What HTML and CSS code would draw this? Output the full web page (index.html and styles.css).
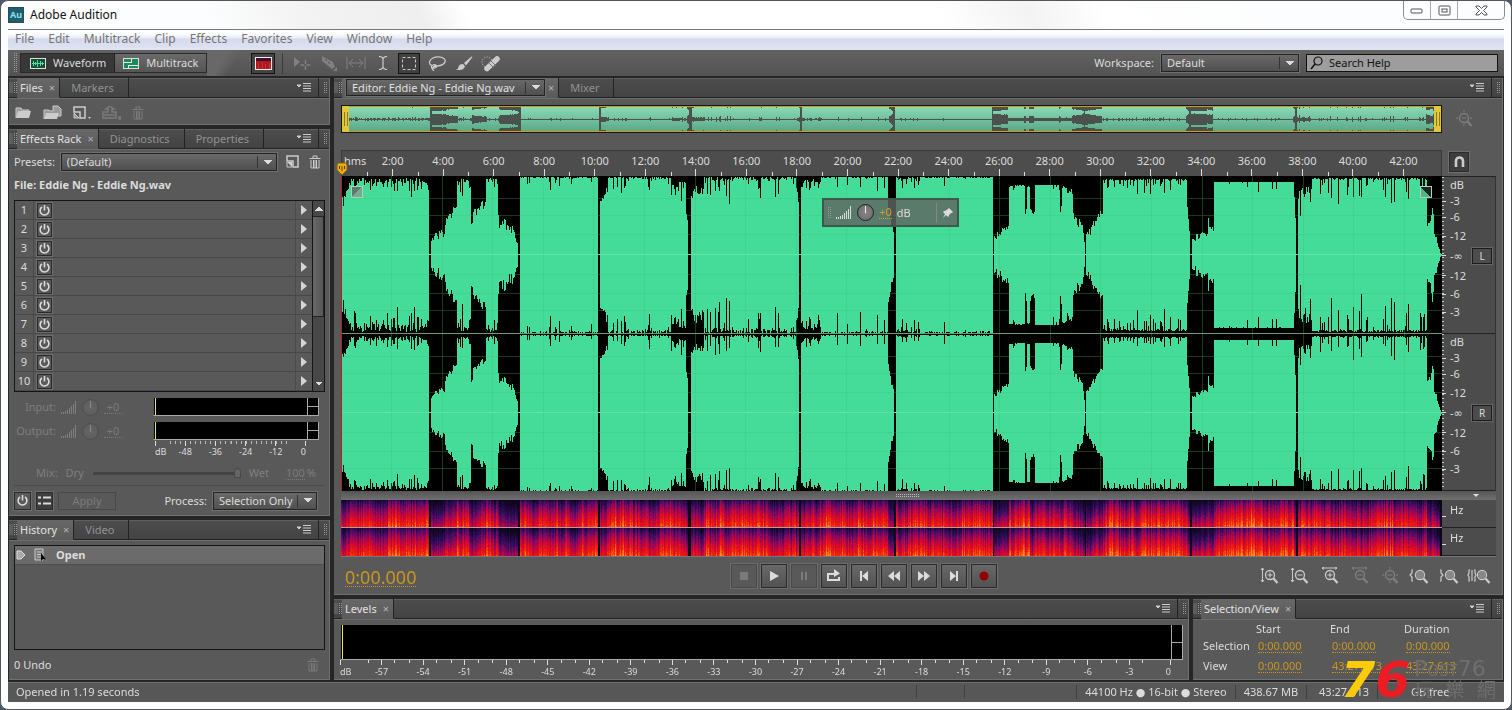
FILE: index.html
```html
<!DOCTYPE html>
<html lang="en">
  <head>
    <meta charset="UTF-8" />
    <meta name="viewport" content="width=device-width, initial-scale=1.0" />
    <title>Adobe Audition</title>
    <link rel="stylesheet" href="styles.css">
  </head>
  <body>
    <svg class="sprite" aria-hidden="true">
      <symbol id="power" viewBox="0 0 13 13"><path d="M4 3a4.4 4.4 0 1 0 5 0M6.500 1v5.500" fill="none" stroke="currentColor" stroke-width="1.600" /></symbol>
      <symbol id="menu" viewBox="0 0 14 9"><path d="M0 2h4L2 4zM6 .500h8M6 3h8M6 5.500h8M6 8h8" fill="currentColor" stroke="currentColor" stroke-width="1" /></symbol>
      <symbol id="trash" viewBox="0 0 12 14"><path d="M.500 3.500h11M4 3V1h4v2M2 5v8h8V5M4.500 5v8M7.500 5v8M6 5v8" fill="none" stroke="currentColor" /></symbol>
      <symbol id="new" viewBox="0 0 14 14"><path d="M1 1h11v11H7V6H1z" fill="none" stroke="currentColor" stroke-width="1.500" /><path d="M1 7h5v5z" fill="currentColor" /><path d="M1 7v5h5" fill="none" stroke="currentColor" /></symbol>
      <symbol id="bars" viewBox="0 0 16 13"><path d="M.500 11v2M2.500 11v2M4.500 10v3M6.500 9v4M8.500 7v6M10.500 5v8M12.500 3v10M14.500 0v13" stroke="currentColor" /></symbol>
      <symbol id="lens" viewBox="0 0 20 18"><circle cx="11" cy="8" r="4.500" fill="none" stroke="currentColor" stroke-width="1.300" /><path d="M14.500 11.500l4 4.500" stroke="currentColor" stroke-width="2.200" /></symbol>
    </svg>

    <div class="window">
      <header class="title-bar">
        <span class="app-icon">Au</span>
        <h1>Adobe Audition</h1>
        <div class="window-buttons">
          <button aria-label="Minimize"><svg width="14" height="7" viewBox="0 0 14 7"><rect x="1" y="2" width="11" height="4" rx="1" fill="#fff" stroke="#555" /></svg></button>
          <button aria-label="Maximize"><svg width="13" height="11" viewBox="0 0 13 11"><rect x="1" y="1" width="11" height="9" rx="1" fill="#fff" stroke="#555" /><rect x="4" y="4" width="5" height="3" fill="#fff" stroke="#555" /></svg></button>
          <button aria-label="Close" class="close"><svg width="13" height="11" viewBox="0 0 13 11"><path d="M1 1h3l2.500 2.500L9 1h3v1L8.500 5.500 12 9v1H9L6.500 7.500 4 10H1V9l3.500-3.500L1 2z" fill="#fff" stroke="#555" /></svg></button>
        </div>
      </header>

      <nav class="menu-bar">
        <a href="#">File</a><a href="#">Edit</a><a href="#">Multitrack</a><a href="#">Clip</a><a href="#">Effects</a><a href="#">Favorites</a><a href="#">View</a><a href="#">Window</a><a href="#">Help</a>
      </nav>

      <div class="toolbar">
        <span class="grip"></span>
        <div class="modes">
          <button class="mode on"><svg width="17" height="13" viewBox="0 0 17 13"><rect x=".500" y="1.500" width="15" height="10" fill="#174e37" stroke="#ddd" /><path d="M2 6.500h12M3.500 4v5M5.500 5v3M7.500 3v7M10.500 4v5M12.500 5v3" stroke="#4fe0a0" /></svg>Waveform</button>
          <button class="mode"><svg width="17" height="13" viewBox="0 0 17 13"><rect x=".500" y="1.500" width="15" height="10" fill="#1d8a5c" stroke="#ddd" /><path d="M1 5.500h8M5 8.500h10M8.500 2v4M5.500 8v3" stroke="#e0f0e8" /></svg>Multitrack</button>
        </div>
        <span class="swoosh"></span>
        <button class="spectral-button" aria-label="Show spectral display"><svg width="17" height="13" viewBox="0 0 17 13"><rect x=".500" y=".500" width="16" height="12" fill="#b01820" stroke="#eee" /><path d="M1 1h15v3H1z" fill="#401030" /><path d="M3.500 6v6M7.500 5v7M10.500 7v5M14.500 6v6" stroke="#cc302c" /></svg></button>
        <div class="tools">
          <button disabled aria-label="Move"><svg width="18" height="16" viewBox="0 0 18 16"><path d="M1 2v10l6-5z" fill="currentColor" /><path d="M12.500 5v10M7.500 10h10" stroke="currentColor" stroke-width="1.500" stroke-dasharray="4 2" /></svg></button>
          <button disabled aria-label="Razor"><svg width="18" height="16" viewBox="0 0 18 16"><path d="M2 1l11 6 2 5-3 2L2 6z" fill="currentColor" /><path d="M5 4l2 2M8 7l2 2" stroke="#555" /><path d="M17 12v4h-4z" fill="currentColor" /></svg></button>
          <button disabled aria-label="Slip"><svg width="20" height="14" viewBox="0 0 20 14"><path d="M1 1v12M19 1v12M3 7h14M7 3L3 7l4 4M13 3l4 4-4 4" fill="none" stroke="currentColor" /></svg></button>
          <button aria-label="Time selection"><svg width="10" height="14" viewBox="0 0 10 14"><path d="M1 .500q3 0 4 2 1-2 4-2M5 2v10M1 13.500q3 0 4-2 1 2 4 2" fill="none" stroke="currentColor" stroke-width="1.200" /></svg></button>
          <button class="on" aria-label="Marquee selection"><svg width="16" height="15" viewBox="0 0 16 15"><rect x="1.500" y="1.500" width="13" height="12" fill="none" stroke="currentColor" stroke-dasharray="3 2" /></svg></button>
          <button aria-label="Lasso selection"><svg width="18" height="15" viewBox="0 0 18 15"><path d="M4 9.500C0 8 1 4 5 2s11-1 12 2-3 6-8 6-5 3-2 2 1-4-2-3-1 4 1 6" fill="none" stroke="currentColor" stroke-width="1.300" /></svg></button>
          <button aria-label="Paintbrush"><svg width="18" height="15" viewBox="0 0 18 15"><path d="M16.500.500L9 7l2 2.500L17.500 1zM8 8q-4 0-4.500 3T.500 13.500Q8 15.500 10 10.500z" fill="currentColor" /></svg></button>
          <button aria-label="Spot healing"><svg width="20" height="17" viewBox="0 0 20 17"><circle cx="6" cy="7" r="5" fill="none" stroke="currentColor" stroke-dasharray="1 1.500" /><path d="M6 13.500L16 4" stroke="currentColor" stroke-width="5.500" stroke-linecap="round" /><path d="M8 8l5 5M10 6l5 5" stroke="#777" /></svg></button>
        </div>
        <label class="workspace-label" for="workspace">Workspace:</label>
        <select id="workspace" class="workspace-select"><option>Default</option></select>
        <label class="search"><svg width="14" height="14" viewBox="0 0 14 14"><circle cx="8" cy="5" r="4" fill="none" stroke="#111" stroke-width="1.200" /><path d="M5 8l-4 5" stroke="#111" stroke-width="1.500" /></svg><input type="text" value="Search Help" aria-label="Search help" /></label>
      </div>

      <main class="workspace">
        <div class="side">
          <section class="panel">
            <div class="tabs">
              <span class="grip small"></span>
              <button class="tab active">Files <i>×</i></button>
              <button class="tab">Markers</button>
              <button class="panel-menu" aria-label="Panel menu"><svg width="14" height="9"><use href="#menu" /></svg></button>
              <span class="panel-end"><span class="grip small"></span></span>
            </div>
            <div class="file-tools">
              <button aria-label="Open file"><svg width="17" height="13" viewBox="0 0 17 13"><path d="M1 12V2h5l1 2h7v1" fill="#999" stroke="currentColor" /><path d="M1 12l2-7h13l-2 7z" fill="currentColor" /></svg></button>
              <button aria-label="Import file"><svg width="19" height="15" viewBox="0 0 19 15"><path d="M1 14V5h5l1 1h3V1h5l3 3v7h-3" fill="#999" stroke="currentColor" /><path d="M1 14l2-6h13l-2 6z" fill="currentColor" /></svg></button>
              <button aria-label="New file"><svg width="18" height="14" viewBox="0 0 18 14"><path d="M1 1h11v11H7V6H1z" fill="none" stroke="currentColor" stroke-width="1.500" /><path d="M1 7v5h5z" fill="#999" stroke="currentColor" /><path d="M15 11h3l-1.500 2z" fill="currentColor" /></svg></button>
              <button disabled aria-label="Insert into multitrack"><svg width="19" height="14" viewBox="0 0 19 14"><path d="M1 6h5V3H4l4-3 4 3h-2v3h4v6H1zM2 9h11M17 11h2v2h-2z" fill="none" stroke="currentColor" stroke-width="1.500" /></svg></button>
              <button disabled aria-label="Close file"><svg width="12" height="14"><use href="#trash" /></svg></button>
            </div>
          </section>

          <section class="panel">
            <div class="tabs">
              <span class="grip small"></span>
              <button class="tab active">Effects Rack <i>×</i></button>
              <button class="tab">Diagnostics</button>
              <button class="tab">Properties</button>
              <button class="panel-menu" aria-label="Panel menu"><svg width="14" height="9"><use href="#menu" /></svg></button>
              <span class="panel-end"><span class="grip small"></span></span>
            </div>
            <div class="rack">
              <div class="presets">
                <label for="presets">Presets:</label>
                <select id="presets"><option>(Default)</option></select>
                <button aria-label="Save preset"><svg width="14" height="14"><use href="#new" /></svg></button>
                <button aria-label="Delete preset"><svg width="12" height="14"><use href="#trash" /></svg></button>
              </div>
              <h2>File: Eddie Ng - Eddie Ng.wav</h2>
              <div class="slots">
                <ol id="slots"></ol>
                <div class="scrollbar"><b></b><span></span><b class="down"></b></div>
              </div>
              <div class="gains">
                <div class="gain">
                  <span>Input:</span><svg width="16" height="13"><use href="#bars" /></svg><span class="knob"></span><button disabled class="hot">+0</button>
                  <div class="meter"><span></span></div>
                </div>
                <div class="gain">
                  <span>Output:</span><svg width="16" height="13"><use href="#bars" /></svg><span class="knob"></span><button disabled class="hot">+0</button>
                  <div class="meter"><span></span></div>
                </div>
                <div class="scale rack-scale"><span>dB</span><span>-48</span><span>-36</span><span>-24</span><span>-12</span><span>0</span></div>
              </div>
              <div class="mix">
                <label for="mix">Mix:</label><span>Dry</span>
                <input id="mix" type="range" value="100" disabled />
                <span>Wet</span><button disabled class="hot">100</button><span>%</span>
              </div>
              <div class="process">
                <button class="icon-button" aria-label="Toggle rack power"><svg width="13" height="13"><use href="#power" /></svg></button>
                <button class="icon-button pressed" aria-label="Show list"><svg width="13" height="9" viewBox="0 0 13 9"><path d="M0 1.500h3M0 7.500h3M5 1.500h8M5 7.500h8" stroke="currentColor" stroke-width="2" /></svg></button>
                <button class="apply" disabled>Apply</button>
                <label for="process">Process:</label>
                <select id="process"><option>Selection Only</option></select>
              </div>
            </div>
          </section>

          <section class="panel history">
            <div class="tabs">
              <span class="grip small"></span>
              <button class="tab active">History <i>×</i></button>
              <button class="tab">Video</button>
              <button class="panel-menu" aria-label="Panel menu"><svg width="14" height="9"><use href="#menu" /></svg></button>
              <span class="panel-end"><span class="grip small"></span></span>
            </div>
            <div class="history-list">
              <div class="history-item">
                <svg width="10" height="10" viewBox="0 0 10 10"><path d="M1 1h4l4 4-4 4H1z" fill="#aaa" stroke="#ddd" /></svg>
                <svg width="14" height="14" viewBox="0 0 14 14"><path d="M1 1h8v11H1zM3 4h5M3 6.500h5M3 9h4" fill="#777" stroke="#ccc" /><path d="M7 5v8l2-2 3 .500z" fill="#000" /></svg>
                <strong>Open</strong>
              </div>
            </div>
            <div class="history-foot"><span>0 Undo</span><button disabled aria-label="Delete history"><svg width="12" height="14"><use href="#trash" /></svg></button></div>
          </section>
        </div>

        <div class="stage">
          <section class="panel editor">
            <div class="tabs">
              <span class="grip small"></span>
              <div class="tab active file-tab"><select aria-label="Editor file"><option>Editor: Eddie Ng - Eddie Ng.wav</option></select> <i>×</i></div>
              <button class="tab">Mixer</button>
              <button class="panel-menu" aria-label="Panel menu"><svg width="14" height="9"><use href="#menu" /></svg></button>
              <span class="panel-end"><span class="grip small"></span></span>
            </div>

            <div class="overview-row">
              <div class="overview"><canvas id="overview" width="1100" height="26"></canvas></div>
              <button disabled aria-label="Zoom out full"><svg width="20" height="18" viewBox="0 0 20 18"><use href="#lens" width="20" height="18" /><path d="M9 8h4M11 0v2M11 14v2M3 8h2M17 8h2" stroke="currentColor" /></svg></button>
            </div>

            <div class="ruler-row">
              <div class="ruler">
                <span class="unit">hms</span>
                <span>2:00</span><span>4:00</span><span>6:00</span><span>8:00</span><span>10:00</span><span>12:00</span><span>14:00</span><span>16:00</span><span>18:00</span><span>20:00</span><span>22:00</span><span>24:00</span><span>26:00</span><span>28:00</span><span>30:00</span><span>32:00</span><span>34:00</span><span>36:00</span><span>38:00</span><span>40:00</span><span>42:00</span>
                <svg class="playhead" width="12" height="14" viewBox="0 0 12 14"><path d="M2 1h8l1 2v5l-5 5-5-5V3z" fill="#e8ae17" stroke="#8a6100" /><path d="M3.500 4v3M6 4v5M8.500 4v3" stroke="#5c4000" /></svg>
              </div>
              <button class="icon-button pressed snap" aria-label="Snap"><svg width="11" height="12" viewBox="0 0 11 12"><path d="M2 11V5a3.500 3.500 0 0 1 7 0v6" fill="none" stroke="#ccc" stroke-width="2.600" /></svg></button>
            </div>

            <div class="display">
              <div class="waves">
                <canvas id="waves" width="1100" height="315"></canvas>
                <span class="fade in"></span>
                <span class="fade out"></span>
                <div class="hud">
                  <span class="grip"></span>
                  <svg width="16" height="13"><use href="#bars" /></svg>
                  <span class="knob"></span>
                  <button class="hot">+0</button><span>dB</span>
                  <button class="pin" aria-label="Pin"><svg width="10" height="10" viewBox="0 0 10 10"><path d="M6 0l4 4-1 1-1 0-2 2 0 1-1 1-2-2-3 3 2-4-2-2 1-1 1 0 3-2z" fill="currentColor" /></svg></button>
                </div>
              </div>
              <div class="channels">
                <div class="channel"><span>dB</span><span>-3</span><span>-6</span><span>-12</span><span>-∞</span><span>-12</span><span>-6</span><span>-3</span><button>L</button></div>
                <div class="channel"><span>dB</span><span>-3</span><span>-6</span><span>-12</span><span>-∞</span><span>-12</span><span>-6</span><span>-3</span><button>R</button></div>
              </div>
              <div class="splitter"><span class="splitter-grip"></span><i></i></div>
              <canvas id="spectral" width="1100" height="56"></canvas>
              <div class="hertz"><span>Hz</span><span>Hz</span></div>
            </div>

            <div class="transport-row">
              <button class="hot time">0:00.000</button>
              <div class="transport">
                <button disabled aria-label="Stop"><svg width="16" height="14" viewBox="0 0 16 14"><path d="M4 3h8v8H4z" fill="currentColor" /></svg></button>
                <button aria-label="Play"><svg width="16" height="14" viewBox="0 0 16 14"><path d="M4 2l9 5-9 5z" fill="currentColor" /></svg></button>
                <button disabled aria-label="Pause"><svg width="16" height="14" viewBox="0 0 16 14"><path d="M5 3h2v8H5zM9 3h2v8H9z" fill="currentColor" /></svg></button>
                <button aria-label="Loop"><svg width="16" height="14" viewBox="0 0 16 14"><path d="M5 5H2v6h11V8M3 5h6" fill="none" stroke="currentColor" stroke-width="2" /><path d="M8 0l6 4.500L8 8z" fill="currentColor" /></svg></button>
                <button aria-label="Go to start"><svg width="16" height="14" viewBox="0 0 16 14"><path d="M4 2h2v10H4zM12 2v10L6 7z" fill="currentColor" /></svg></button>
                <button aria-label="Rewind"><svg width="16" height="14" viewBox="0 0 16 14"><path d="M8 2v10L2 7zM14 2v10L8 7z" fill="currentColor" /></svg></button>
                <button aria-label="Fast forward"><svg width="16" height="14" viewBox="0 0 16 14"><path d="M2 2v10l6-5zM8 2v10l6-5z" fill="currentColor" /></svg></button>
                <button aria-label="Go to end"><svg width="16" height="14" viewBox="0 0 16 14"><path d="M4 2v10l6-5zM10 2h2v10h-2z" fill="currentColor" /></svg></button>
                <button aria-label="Record"><svg width="16" height="14" viewBox="0 0 16 14"><circle cx="8" cy="7" r="4.500" fill="#900000" /></svg></button>
              </div>
              <div class="zooms">
                <button aria-label="Zoom in amplitude"><svg width="20" height="18" viewBox="0 0 20 18"><use href="#lens" width="20" height="18" /><path d="M8.500 8h5M11 5.500v5M3.500 1v14M2 3l1.500-2L5 3M2 13l1.500 2L5 13" fill="none" stroke="currentColor" /></svg></button>
                <button aria-label="Zoom out amplitude"><svg width="20" height="18" viewBox="0 0 20 18"><use href="#lens" width="20" height="18" /><path d="M8.500 8h5M3.500 1v14M2 3l1.500-2L5 3M2 13l1.500 2L5 13" fill="none" stroke="currentColor" /></svg></button>
                <button aria-label="Zoom in time"><svg width="20" height="18" viewBox="0 0 20 18"><use href="#lens" width="20" height="18" /><path d="M8.500 8h5M11 5.500v5M3 1h15M5 0L3 1l2 1.500M16 0l2 1-2 1.500" fill="none" stroke="currentColor" /></svg></button>
                <button disabled aria-label="Zoom out time"><svg width="20" height="18" viewBox="0 0 20 18"><use href="#lens" width="20" height="18" /><path d="M8.500 8h5M3 1h15M5 0L3 1l2 1.500M16 0l2 1-2 1.500" fill="none" stroke="currentColor" /></svg></button>
                <button disabled aria-label="Zoom out full"><svg width="20" height="18" viewBox="0 0 20 18"><use href="#lens" width="20" height="18" /><path d="M8.500 8h5M11 0v2M11 14v2M3 8h2M17 8h2" stroke="currentColor" /></svg></button>
                <button aria-label="Zoom to in point"><svg width="20" height="18" viewBox="0 0 20 18"><use href="#lens" width="20" height="18" /><circle cx="11" cy="8" r="4" fill="#888" /><path d="M4 3H3v3L1 8l2 2v4h1" fill="none" stroke="currentColor" stroke-width="1.200" /></svg></button>
                <button aria-label="Zoom to out point"><svg width="20" height="18" viewBox="0 0 20 18"><use href="#lens" width="20" height="18" /><circle cx="11" cy="8" r="4" fill="#888" /><path d="M1 3h1v3l2 2-2 2v4H1" fill="none" stroke="currentColor" stroke-width="1.200" /></svg></button>
                <button aria-label="Zoom to selection"><svg width="24" height="18" viewBox="0 0 24 18"><use href="#lens" x="4" width="20" height="18" /><circle cx="15" cy="8" r="4" fill="#888" /><path d="M3 3H2v3L1 8l1 2v4h1M5 3v11M7 3h1v3l1 2-1 2v4H7" fill="none" stroke="currentColor" stroke-width="1.200" /></svg></button>
              </div>
            </div>
          </section>

          <div class="bottom">
            <section class="panel levels">
              <div class="tabs">
                <span class="grip small"></span>
                <button class="tab active">Levels <i>×</i></button>
                <button class="panel-menu" aria-label="Panel menu"><svg width="14" height="9"><use href="#menu" /></svg></button>
                <span class="panel-end"><span class="grip small"></span></span>
              </div>
              <div class="levels-body">
                <div class="meter"><span></span></div>
                <div class="scale"><span>dB</span><span>-57</span><span>-54</span><span>-51</span><span>-48</span><span>-45</span><span>-42</span><span>-39</span><span>-36</span><span>-33</span><span>-30</span><span>-27</span><span>-24</span><span>-21</span><span>-18</span><span>-15</span><span>-12</span><span>-9</span><span>-6</span><span>-3</span><span>0</span></div>
              </div>
            </section>
            <section class="panel selection">
              <div class="tabs">
                <span class="grip small"></span>
                <button class="tab active">Selection/View <i>×</i></button>
                <button class="panel-menu" aria-label="Panel menu"><svg width="14" height="9"><use href="#menu" /></svg></button>
                <span class="panel-end"><span class="grip small"></span></span>
              </div>
              <table>
                <tr><td></td><th scope="col">Start</th><th scope="col">End</th><th scope="col">Duration</th></tr>
                <tr><th scope="row">Selection</th><td><button class="hot">0:00.000</button></td><td><button class="hot">0:00.000</button></td><td><button class="hot">0:00.000</button></td></tr>
                <tr><th scope="row">View</th><td><button class="hot">0:00.000</button></td><td><button class="hot">43:27.613</button></td><td><button class="hot">43:27.613</button></td></tr>
              </table>
            </section>
          </div>
        </div>
      </main>

      <footer class="status">
        <span class="message">Opened in 1.19 seconds</span>
        <span class="blank"></span>
        <span class="blank long"></span>
        <span>44100 Hz ● 16-bit ● Stereo</span>
        <span>438.67 MB</span>
        <span class="duration">43:27.613</span>
        <span class="free">GB free</span>
      </footer>
    </div>

    <div class="watermark">
      <b class="seven">7</b><b class="six">6</b>
      <div class="site"><em>Post76</em><div class="site-name"><span>玩</span><span>樂</span><span>網</span></div></div>
    </div>

    <script src="script.js"></script>
  </body>
</html>
```

FILE: styles.css
```css
* {
  box-sizing: border-box;
}
body {
  margin: 0;
  background: #4b5a66;
  color: #dcdcdc;
  font: 11px/14px "Noto Sans", "DejaVu Sans", "Noto Sans CJK TC", sans-serif;
}
button,
select,
input {
  font: inherit;
  color: inherit;
}
button {
  display: flex;
  align-items: center;
  justify-content: center;
  padding: 0;
  border: 0;
  background: none;
}
button:disabled {
  color: #7b7b7b;
}
svg,
canvas {
  display: block;
  flex: none;
}
i {
  font-style: normal;
}
.sprite {
  position: absolute;
  width: 0;
  height: 0;
}
select {
  appearance: none;
  height: 18px;
  padding: 0 22px 0 5px;
  border: 1px solid #232323;
  border-radius: 0;
  outline: 1px solid #707070;
  background:
    linear-gradient(#333, #333) right 18px center / 1px 12px no-repeat,
    linear-gradient(to bottom right, #ddd 50%, transparent 0) right 4px center / 4px 5px no-repeat,
    linear-gradient(to bottom left, #ddd 50%, transparent 0) right 8px center / 4px 5px no-repeat,
    linear-gradient(#696969, #505050);
}
.grip {
  width: 4px;
  height: 20px;
  background: conic-gradient(#999 25%, transparent 0) 0 0 / 2px 2px;
}
.grip.small {
  height: 11px;
  flex: none;
}
.hot {
  display: inline-block;
  color: #c8961e;
  border-bottom: 1px dotted currentColor;
  line-height: 12px;
}

/* window frame */
.window {
  display: flex;
  flex-direction: column;
  height: 100vh;
  padding: 0 7px 7px;
  border: 1px solid #555;
  border-radius: 8px;
  background: #fcfdfe;
}
.title-bar {
  display: flex;
  align-items: center;
  height: 28px;
  flex: none;
  margin: 0 -7px;
  padding-left: 7px;
  border-radius: 8px 8px 0 0;
  background: linear-gradient(65deg, transparent 14%, #f3f3f3 20%, #efefef 28%, #fff 31%, #fff 62%, #f3f3f3 68%, #fff 73%, transparent 85%);
}
.title-bar h1 {
  flex: 1;
  margin: 0 0 0 6px;
  color: #111;
  font-size: 12px;
  font-weight: 400;
}
.app-icon {
  width: 16px;
  height: 16px;
  border: 1px solid #2d4c55;
  background: #1d5f6e;
  color: #8adfe9;
  font-size: 9px;
  font-weight: 700;
  line-height: 14px;
  text-align: center;
}
.window-buttons {
  display: flex;
  align-self: flex-start;
  height: 19px;
  margin-right: 6px;
  border: 1px solid #8d8d8d;
  border-top: 0;
  border-radius: 0 0 5px 5px;
}
.window-buttons button {
  width: 27px;
  border-right: 1px solid #aaa;
}
.window-buttons .close {
  width: 46px;
  border: 0;
}
.menu-bar {
  display: flex;
  gap: 14px;
  height: 21px;
  flex: none;
  padding: 0 7px;
  border-top: 1px solid #777;
  background: linear-gradient(#fff 15%, #e8ebf6 40%, #d5daec 45%, #dfe4f3);
}
.menu-bar a {
  color: #767676;
  font-size: 12px;
  line-height: 18px;
  text-decoration: none;
}

/* toolbar */
.toolbar {
  display: flex;
  align-items: center;
  height: 26px;
  flex: none;
  padding: 0 6px 0 5px;
  background: linear-gradient(#626262, #535353);
}
.modes {
  display: flex;
  margin-left: 3px;
  border: 1px solid #2a2a2a;
}
.mode {
  gap: 6px;
  height: 18px;
  padding: 0 8px;
  background: linear-gradient(#6a6a6a, #555);
}
.mode.on {
  padding-left: 9px;
  border-right: 1px solid #222;
  background: #383838;
}
.swoosh {
  width: 44px;
  height: 26px;
  background: linear-gradient(120deg, #686868 35%, transparent 60%);
}
.spectral-button {
  width: 24px;
  height: 21px;
  border: 1px solid #141414;
  background: #444;
}
.tools {
  display: flex;
  margin-left: 7px;
  padding-left: 5px;
  border-left: 1px solid #3b3b3b;
}
.tools button {
  width: 27px;
  height: 21px;
  color: #ccc;
}
.tools button:disabled {
  color: #808080;
}
.tools .on {
  width: 22px;
  margin: 0 3px 0 2px;
  border: 1px solid #141414;
  background: #404040;
}
.workspace-label {
  margin-left: auto;
}
.workspace-select {
  width: 138px;
  margin: 0 7px;
}
.search {
  display: flex;
  align-items: center;
  gap: 5px;
  width: 192px;
  height: 18px;
  padding-left: 3px;
  border: 1px solid #111;
  background: #9d9d9d;
}
.search input {
  min-width: 0;
  flex: 1;
  padding: 0;
  border: 0;
  background: none;
  color: #111;
}

/* panels */
.workspace {
  display: grid;
  grid-template-columns: 321px minmax(0, 1fr);
  gap: 4px;
  flex: 1;
  min-height: 0;
  padding: 2px 1px;
  background: #262626;
}
.side,
.stage {
  display: flex;
  flex-direction: column;
  gap: 4px;
  min-width: 0;
  min-height: 0;
}
.panel {
  display: flex;
  flex-direction: column;
  min-width: 0;
  border: solid #707070;
  border-width: 0 1px 1px 0;
  background: #595959;
}
.tabs {
  display: flex;
  align-items: center;
  height: 20px;
  flex: none;
  padding-left: 4px;
  border-bottom: 1px solid #222;
  background: linear-gradient(#4d4d4d, #434343);
  box-shadow: inset 0 1px #606060, 0 1px #6d6d6d;
}
.tabs > .grip:first-child {
  box-shadow: -4px 0 #5e5e5e;
}
.tab {
  height: 21px;
  padding: 0 14px 0 11px;
  border-right: 1px solid #222;
  color: #929292;
}
.tab.active {
  position: relative;
  height: 20px;
  gap: 6px;
  margin-bottom: -1px;
  padding: 0 4px 0 3px;
  border-bottom: 1px solid #5b5b5b;
  background: linear-gradient(#686868, #5b5b5b);
  color: #e2e2e2;
}
.tab i {
  color: #b5b5b5;
}
.panel-menu {
  margin: 0 7px 0 auto;
  color: #ccc;
}
.panel-end {
  display: flex;
  align-items: center;
  align-self: stretch;
  width: 11px;
  padding-left: 4px;
  border-left: 1px solid #222;
}
.file-tools {
  display: flex;
  align-items: center;
  gap: 11px;
  height: 26px;
  padding: 3px 6px 0;
  color: #ccc;
}
.rack {
  padding: 4px 4px 0 5px;
}
.presets {
  display: flex;
  align-items: center;
  height: 18px;
}
.presets select {
  width: 216px;
  margin-left: 6px;
}
.presets button {
  margin-left: 9px;
  color: #ccc;
}
.rack h2 {
  margin: 0 0 1px;
  font-size: 11px;
  line-height: 28px;
}
.slots {
  display: flex;
  border: 1px solid #151515;
}
.slots ol {
  flex: 1;
  margin: 0;
  padding: 0;
  list-style: none;
}
.slots li {
  display: flex;
  align-items: center;
  height: 19px;
  border-bottom: 1px solid #484848;
}
.slot-number {
  width: 19px;
  border-right: 1px solid #4b4b4b;
  text-align: center;
  line-height: 18px;
}
.slot-power {
  width: 15px;
  height: 15px;
  margin-left: 3px;
  border: 1px solid #2a2a2a;
  outline: 1px solid #6e6e6e;
}
.slot-menu {
  width: 17px;
  height: 18px;
  margin-left: auto;
  border-left: 1px solid #4b4b4b;
  color: #d5d5d5;
}
.scrollbar {
  display: flex;
  flex-direction: column;
  width: 12px;
  border-left: 1px solid #151515;
  background: #484848;
}
.scrollbar b {
  height: 15px;
  background:
    linear-gradient(to top left, #ddd 50%, transparent 0) 2px 6px / 4px 4px no-repeat,
    linear-gradient(to top right, #ddd 50%, transparent 0) 6px 6px / 4px 4px no-repeat;
}
.scrollbar .down {
  background:
    linear-gradient(to bottom left, #ddd 50%, transparent 0) 2px 6px / 4px 4px no-repeat,
    linear-gradient(to bottom right, #ddd 50%, transparent 0) 6px 6px / 4px 4px no-repeat;
}
.scrollbar span {
  height: 101px;
  margin-bottom: auto;
  border: 1px solid #222;
  border-left: 0;
  background: linear-gradient(90deg, #686868, #575757);
}
.gains {
  padding: 3px 6px 0 0;
  color: #7f7f7f;
}
.gain {
  display: grid;
  grid-template-columns: 42px 16px 17px 18px 1fr;
  gap: 5px;
  align-items: center;
  height: 24px;
}
.gain > span:first-child {
  text-align: right;
}
.knob {
  width: 17px;
  height: 17px;
  border: 1px solid #4d4d4d;
  border-radius: 50%;
  background: linear-gradient(#8a8a8a, #8a8a8a) center 1px / 1px 7px no-repeat, radial-gradient(#666, #5a5a5a);
}
.meter {
  display: flex;
  justify-content: flex-end;
  border-bottom: 1px solid #aaa;
  border-left: 1px solid #555;
  background: linear-gradient(#e8e84c, #e8e84c) 1px 0 / 1px 100% no-repeat, #000;
}
.meter span {
  width: 12px;
  border: solid #aaa;
  border-width: 0 1px;
  background: linear-gradient(#aaa, #aaa) center / 100% 1px no-repeat;
}
.gain .meter {
  width: 166px;
  height: 18px;
  justify-self: end;
}
.scale {
  display: flex;
  font-size: 9px;
  color: #dcdcdc;
}
.scale span {
  flex: 2 2 0;
  padding-top: 4px;
  text-align: center;
  background:
    linear-gradient(#ddd, #ddd) center top / 1px 5px no-repeat,
    linear-gradient(#ddd, #ddd) 17% 0 / 1px 3px no-repeat,
    linear-gradient(#ddd, #ddd) 83% 0 / 1px 3px no-repeat;
}
.scale span:first-child {
  flex: 1 1 0;
  text-align: left;
  background: linear-gradient(#ddd, #ddd) left top / 1px 5px no-repeat;
}
.scale span:last-child {
  flex: 1 1 0;
  text-align: right;
  background: linear-gradient(#ddd, #ddd) right top / 1px 5px no-repeat;
}
.rack-scale {
  width: 151px;
  height: 20px;
  margin: -2px 13px 0 auto;
}
.rack-scale span {
  background:
    linear-gradient(#ddd, #ddd) center top / 1px 5px no-repeat,
    repeating-linear-gradient(90deg, #bbb 0 1px, transparent 1px 5px) top / 100% 3px no-repeat;
}
.mix {
  display: flex;
  align-items: center;
  gap: 8px;
  height: 25px;
  padding: 0 3px 0 22px;
  border-bottom: 1px solid #4b4b4b;
  color: #7f7f7f;
}
.mix input {
  appearance: none;
  width: 148px;
  height: 12px;
  margin: 0 0 0 1px;
  background: linear-gradient(#444, #444) center / 100% 3px no-repeat;
}
.mix input::-webkit-slider-thumb {
  appearance: none;
  width: 7px;
  height: 10px;
  border: 1px solid #484848;
  border-radius: 4px 4px 0 0;
  background: #656565;
}
.mix .hot {
  margin-left: 9px;
}
.mix .hot + span {
  margin-left: -6px;
}
.process {
  display: flex;
  align-items: center;
  height: 29px;
}
.icon-button {
  width: 17px;
  height: 18px;
  margin-right: 5px;
  border: 1px solid #2b2b2b;
  outline: 1px solid #6d6d6d;
}
.icon-button.pressed {
  background: #3e3e3e;
}
.apply {
  width: 58px;
  height: 18px;
  border: 1px solid #484848;
}
.process label {
  margin-left: auto;
}
.process select {
  width: 104px;
  margin: 0 8px 0 6px;
}
.history {
  flex: 1;
  min-height: 0;
}
.history-list {
  flex: 1;
  margin: 5px 4px 0 5px;
  border: 1px solid #151515;
}
.history-item {
  display: flex;
  align-items: center;
  gap: 8px;
  height: 19px;
  padding-left: 1px;
  border-bottom: 1px solid #4d4d4d;
  background: #6b6b6b;
}
.history-foot {
  display: flex;
  align-items: center;
  justify-content: space-between;
  height: 29px;
  padding: 0 10px 0 5px;
}

/* editor */
.editor {
  flex: 1;
  min-height: 0;
}
.file-tab {
  display: flex;
  align-items: center;
}
.tab.file-tab {
  gap: 3px;
  padding-left: 4px;
}
.file-tab select {
  width: 199px;
  height: 17px;
}
.overview-row {
  display: flex;
  gap: 11px;
  padding: 7px 29px 0 7px;
}
.overview {
  flex: 1;
  border: 1px solid #15150a;
}
canvas {
  width: 100%;
  image-rendering: pixelated;
}
.overview canvas {
  height: 26px;
}
.ruler-row {
  display: flex;
  gap: 7px;
  margin-top: 17px;
  padding: 0 28px 0 7px;
}
.ruler {
  position: relative;
  display: flex;
  flex: 1;
  height: 26px;
  border: 1px solid #393939;
  border-width: 1px 1px 0;
  background: #4d4d4d;
}
.ruler span {
  width: 4.6%;
  padding-top: 3px;
  text-align: center;
  background:
    linear-gradient(#ddd, #ddd) center bottom / 1px 7px no-repeat,
    linear-gradient(#ddd, #ddd) left bottom / 1px 4px no-repeat;
}
.ruler .unit {
  width: 2.3%;
  padding-left: 2px;
  text-align: left;
  background: none;
}
.playhead {
  position: absolute;
  left: -6px;
  bottom: 0;
}
.snap {
  width: 20px;
  height: 20px;
  margin: 2px 5px 0 0;
}
.display {
  display: grid;
  grid-template-columns: minmax(0, 1fr) 54px;
  grid-template-rows: minmax(0, 1fr) 9px 56px;
  flex: 1;
  min-height: 0;
  margin: 0 6px 0 7px;
  border-bottom: 1px solid #777;
}
.waves {
  position: relative;
  min-height: 0;
  background: #000;
}
.waves canvas {
  height: 100%;
}
.fade {
  position: absolute;
  top: 10px;
  width: 12px;
  height: 12px;
  border: 1px solid #b4cfc2;
  background: linear-gradient(to bottom right, #5a7c6c 50%, #79a891 50%);
}
.fade.in {
  left: 10px;
}
.fade.out {
  right: 10px;
  background: linear-gradient(to top right, #55b388 50%, #15291f 50%);
}
.hud {
  position: absolute;
  top: 22px;
  left: 43.7%;
  display: flex;
  align-items: center;
  gap: 5px;
  width: 137px;
  height: 29px;
  padding: 0 4px 0 3px;
  border: 2px solid rgba(60, 85, 72, 0.9);
  background: rgba(95, 100, 97, 0.82);
}
.hud .grip {
  height: 12px;
}
.hud .knob {
  border-color: #222;
  background: linear-gradient(#eee, #eee) center 1px / 1px 7px no-repeat, radial-gradient(#888, #666);
}
.hud .hot {
  color: #d99a1c;
}
.pin {
  width: 17px;
  height: 20px;
  margin-left: auto;
  padding-left: 5px;
  border-left: 1px solid #888;
}
.channels {
  display: grid;
  grid-template-rows: 1fr 1fr;
  min-height: 0;
  border-top: 1px solid #222;
  border-right: 1px solid #333;
  background: #4c4c4c;
}
.channel {
  display: grid;
  grid-template: 17fr 15fr 18fr 20fr 20fr 20fr 18fr 18fr 12fr / 29px 1fr;
  align-items: center;
  min-height: 0;
  border-bottom: 1px solid #222;
  background: repeating-linear-gradient(#ccc 0 1px, transparent 1px 4px) left top / 2px 100% no-repeat;
}
.channel span {
  grid-column: 1;
  padding-left: 8px;
  line-height: 12px;
  white-space: nowrap;
  background: linear-gradient(#ddd, #ddd) left center / 4px 1px no-repeat;
}
.channel span:first-child {
  background: none;
}
.channel button {
  grid-area: 5 / 2;
  width: 20px;
  height: 16px;
  margin-left: 1px;
  border: 1px solid #1b1b1b;
  outline: 1px solid #666;
  font-size: 10px;
}
.splitter {
  display: flex;
  align-items: center;
  grid-column: 1 / -1;
  background: linear-gradient(#555, #707070);
}
.splitter-grip {
  width: 24px;
  height: 4px;
  margin: 0 auto;
  background: conic-gradient(#bbb 25%, transparent 0) 0 0 / 2px 2px;
}
.splitter i {
  margin-right: 17px;
  border: 3px solid transparent;
  border-top-color: #ddd;
  border-bottom: 0;
}
#spectral {
  height: 56px;
}
.hertz {
  display: grid;
  grid-template-rows: 1fr 1fr;
  background: #4c4c4c;
}
.hertz span {
  padding: 3px 0 0 8px;
  border-bottom: 1px solid #222;
  background: linear-gradient(#ddd, #ddd) left 60% / 4px 1px no-repeat;
}
.transport-row {
  display: grid;
  grid-template-columns: 7fr auto 9fr;
  align-items: center;
  height: 37px;
  padding: 0 8px 0 11px;
}
.time {
  justify-self: start;
  margin-top: 4px;
  font-size: 18px;
  line-height: 18px;
}
.transport {
  display: flex;
  gap: 4px;
}
.transport button {
  width: 26px;
  height: 24px;
  border: 1px solid #2a2a2a;
  outline: 1px solid #6d6d6d;
  background: linear-gradient(#686868, #525252);
}
.transport button:disabled {
  border-color: #494949;
  background: none;
}
.zooms {
  display: flex;
  justify-content: flex-end;
}
.zooms button {
  width: 30px;
  color: #ccc;
}
.zooms button:disabled,
.overview-row button:disabled {
  color: #808080;
}

/* levels and selection */
.bottom {
  display: grid;
  grid-template-columns: minmax(0, 1fr) 310px;
  gap: 4px;
}
.levels-body {
  padding: 6px 5px 0 6px;
}
.levels-body .meter {
  height: 35px;
}
.levels-body .scale {
  margin-right: 12px;
  line-height: 15px;
}
.selection table {
  width: 275px;
  margin: 3px 0 0 10px;
  border-collapse: collapse;
  table-layout: fixed;
}
.selection th,
.selection td {
  height: 20px;
  padding: 0;
  font-weight: 400;
  text-align: left;
}
.selection tr:first-child > * {
  height: 14px;
}
.selection tr:first-child td {
  width: 53px;
}
.selection td .hot {
  margin-left: 2px;
}
.status {
  display: flex;
  align-items: center;
  height: 20px;
  flex: none;
  padding: 0 0 2px 8px;
  border-top: 1px solid #707070;
  background: #575757;
}
.status span {
  padding: 0 8px;
  border-left: 1px solid #3f3f3f;
}
.status .message {
  flex: 1;
  padding: 0;
  border: 0;
}
.status .blank {
  width: 48px;
  height: 13px;
}
.status .long {
  width: 112px;
}
.status .duration {
  padding-left: 12px;
}
.status .free {
  width: 127px;
  padding-left: 33px;
}

.watermark {
  position: absolute;
  right: 16px;
  bottom: 7px;
  display: flex;
  align-items: center;
  height: 46px;
  color: #6f6f6f;
}
.watermark b {
  font: italic 700 50px/46px "DejaVu Sans", sans-serif;
}
.seven {
  color: #ffcb08;
}
.six {
  color: #ed1c24;
}
.site {
  width: 82px;
  margin-left: 4px;
}
.site em {
  display: block;
  font: 22px/18px "DejaVu Sans", sans-serif;
  font-variant: small-caps;
}
.site-name {
  display: flex;
  justify-content: space-between;
  font: 19px/22px "Noto Sans CJK TC", sans-serif;
}
```

FILE: script.js
```javascript
// repeatable random numbers so the drawing is the same on every load
let seed = 7;
function rnd() {
  seed = (seed * 16807) % 2147483647;
  return seed / 2147483647;
}

// effect slots
const slots = document.getElementById("slots");
for (let i = 1; i <= 10; i++) {
  slots.innerHTML += `<li>
    <span class="slot-number">${i}</span>
    <button class="slot-power" aria-label="Power ${i}"><svg width="13" height="13"><use href="#power" /></svg></button>
    <button class="slot-menu" aria-label="Menu ${i}"><svg width="6" height="10" viewBox="0 0 6 10"><path d="M0 0l6 5-6 5z" fill="currentColor" /></svg></button>
  </li>`;
}

// [from, to, gap at start, gap at end, jitter, spike chance, spike height]
// the gap is the silence between the wave and the edge of its channel
const parts = [
  [0, 8, 18, 8, 12, 0.3, 12],
  [8, 88, 1, 1, 8, 0.4, 16],
  [88, 90, 78, 78, 0, 0, 0],
  [90, 104, 58, 52, 9, 0, 0],
  [104, 116, 42, 24, 10, 0, 0],
  [116, 130, 2, 2, 8, 0.3, 20],
  [130, 132, 47, 42, 3, 0, 0],
  [132, 145, 28, 22, 14, 0, 0],
  [145, 157, 1, 1, 4, 0.3, 10],
  [157, 171, 38, 48, 14, 0, 0],
  [171, 177, 48, 70, 5, 0, 0],
  [177, 179, 78, 78, 0, 0, 0],
  [179, 257, 0, 0, 2, 0.12, 14],
  [257, 259, 78, 78, 0, 0, 0],
  [259, 267, 20, 8, 8, 0.2, 5],
  [267, 330, 0, 0, 3, 0.18, 18],
  [330, 345, 4, 4, 12, 0.4, 8],
  [345, 347, 36, 50, 3, 0, 0],
  [347, 350, 78, 78, 0, 0, 0],
  [350, 362, 10, 8, 18, 0.2, 10],
  [362, 455, 0, 0, 5, 0.25, 24],
  [455, 458, 8, 30, 6, 0, 0],
  [458, 460, 78, 78, 0, 0, 0],
  [460, 480, 4, 1, 10, 0.3, 12],
  [480, 547, 0, 0, 2, 0.1, 18],
  [547, 552, 28, 60, 4, 0, 0],
  [552, 554, 78, 78, 0, 0, 0],
  [554, 578, 0, 0, 5, 0.25, 12],
  [578, 651, 0, 0, 2, 0.08, 10],
  [651, 652, 78, 78, 0, 0, 0],
  [652, 667, 58, 46, 9, 0, 0],
  [667, 683, 9, 8, 1, 0.3, 9],
  [683, 685, 34, 30, 6, 0, 0],
  [685, 688, 9, 9, 2, 0, 0],
  [688, 693, 30, 34, 8, 0, 0],
  [693, 718, 8, 8, 1, 0.2, 8],
  [718, 720, 34, 24, 4, 0, 0],
  [720, 731, 9, 13, 3, 0.2, 6],
  [731, 741, 34, 48, 9, 0, 0],
  [741, 743, 56, 70, 4, 0, 0],
  [743, 744, 78, 78, 0, 0, 0],
  [744, 761, 54, 28, 10, 0, 0],
  [761, 845, 2, 2, 3, 0.22, 14],
  [845, 848, 30, 62, 4, 0, 0],
  [848, 850, 78, 78, 0, 0, 0],
  [850, 866, 58, 52, 8, 0, 0],
  [866, 872, 40, 54, 12, 0, 0],
  [872, 952, 5, 5, 1, 0.08, 12],
  [952, 954, 20, 60, 4, 0, 0],
  [954, 956, 78, 78, 0, 0, 0],
  [956, 970, 12, 8, 14, 0.2, 20],
  [970, 1085, 1, 1, 3, 0.2, 32],
  [1085, 1092, 38, 28, 14, 0, 0],
  [1092, 1095, 56, 60, 4, 0, 0],
  [1095, 1099, 66, 78, 2, 0, 0],
  [1099, 1100, 79, 79, 0, 0, 0],
];

// four edges: top and bottom of the left and of the right channel
const gaps = [[], [], [], []];
const weight = [1, 1.3, 0.8, 0.8];
for (const [from, to, g0, g1, jitter, chance, height] of parts) {
  for (let x = from; x < to; x++) {
    const base = g0 + ((g1 - g0) * (x - from)) / (to - from);
    const noise = rnd() * jitter;
    const spike = rnd() < chance ? rnd() * height : 0;
    for (let e = 0; e < 4; e++) {
      const extra = (noise + spike) * weight[e] * (0.6 + rnd() * 0.5);
      gaps[e][x] = Math.min(79, Math.floor(base + extra));
    }
  }
}

function drawGrid(ctx, color) {
  ctx.fillStyle = color;
  for (let x = 50; x < 1100; x += 50.6) {
    ctx.fillRect(Math.round(x), 0, 1, 315);
  }
  for (const top of [0, 158]) {
    for (const y of [22, 39, 58, 98, 117, 134]) ctx.fillRect(0, top + y, 1100, 1);
  }
}

function drawWaves() {
  const ctx = document.getElementById("waves").getContext("2d");
  ctx.fillStyle = "#000";
  ctx.fillRect(0, 0, 1100, 315);
  drawGrid(ctx, "#0f2e0f");
  ctx.fillStyle = "#44dc98";
  for (let x = 1; x < 1100; x++) {
    ctx.fillRect(x, 1 + gaps[0][x], 1, 156 - gaps[0][x] - gaps[1][x]);
    ctx.fillRect(x, 159 + gaps[2][x], 1, 156 - gaps[2][x] - gaps[3][x]);
  }
  drawGrid(ctx, "rgba(60, 160, 70, 0.12)");
  ctx.fillStyle = "#5fe3a2";
  ctx.fillRect(1, 78, 1097, 1);
  ctx.fillRect(1, 236, 1097, 1);
  ctx.fillStyle = "#6b9b6b";
  ctx.fillRect(0, 157, 1100, 1);
  ctx.fillStyle = "#b02020";
  ctx.fillRect(0, 0, 1, 315);
}

function drawOverview() {
  const ctx = document.getElementById("overview").getContext("2d");
  const green = ctx.createLinearGradient(0, 0, 0, 26);
  green.addColorStop(0, "#8adcb6");
  green.addColorStop(1, "#5aa687");
  ctx.fillStyle = green;
  ctx.fillRect(0, 0, 1100, 26);
  ctx.fillStyle = "#4b514d";
  for (let x = 0; x < 1100; x++) {
    const up = Math.round(gaps[1][x] / 12);
    const down = Math.round(gaps[2][x] / 12);
    const top = Math.round(gaps[0][x] / 12);
    const bottom = Math.round(gaps[3][x] / 12);
    ctx.fillRect(x, 13 - up, 1, up + down + 1);
    ctx.fillRect(x, 0, 1, top);
    ctx.fillRect(x, 26 - bottom, 1, bottom);
  }
  ctx.strokeStyle = "#c99a2c";
  ctx.strokeRect(0.5, 0.5, 1099, 25);
  ctx.fillStyle = "#e3c73a";
  ctx.fillRect(0, 0, 7, 26);
  ctx.fillRect(1093, 0, 7, 26);
  ctx.fillStyle = "#8d7a22";
  for (const x of [2, 5, 1095, 1098]) ctx.fillRect(x, 6, 1, 14);
}

const heat = [
  [0, 8, 4, 18],
  [0.25, 48, 12, 92],
  [0.45, 140, 8, 96],
  [0.62, 215, 6, 44],
  [0.8, 240, 34, 10],
  [1, 255, 150, 30],
];
function heatColor(v) {
  v = Math.max(0, Math.min(1, v));
  let i = 1;
  while (heat[i][0] < v) i++;
  const a = heat[i - 1];
  const b = heat[i];
  const t = (v - a[0]) / (b[0] - a[0]);
  return [1, 2, 3].map((c) => a[c] + (b[c] - a[c]) * t);
}

function drawSpectral() {
  const ctx = document.getElementById("spectral").getContext("2d");
  const image = ctx.createImageData(1100, 56);
  let drift = 0;
  for (let x = 0; x < 1100; x++) {
    const gap = (gaps[0][x] + gaps[1][x]) / 2;
    drift = drift * 0.85 + (rnd() - 0.5) * 0.12;
    const column = drift + (rnd() - 0.5) * 0.24;
    const quiet = gap / 100;
    for (let y = 0; y < 56; y++) {
      const t = (y % 28) / 27;
      const level = gap > 72 ? 0.05 : 1 - quiet * (1.3 - t * 0.8);
      const v = level * (0.2 + 0.63 * Math.pow(t, 0.75) + column) + (rnd() - 0.5) * 0.1;
      const color = y === 27 ? [190, 150, 160] : heatColor(v);
      image.data.set([...color, 255], (y * 1100 + x) * 4);
    }
  }
  ctx.putImageData(image, 0, 0);
}

drawWaves();
drawOverview();
drawSpectral();
```
